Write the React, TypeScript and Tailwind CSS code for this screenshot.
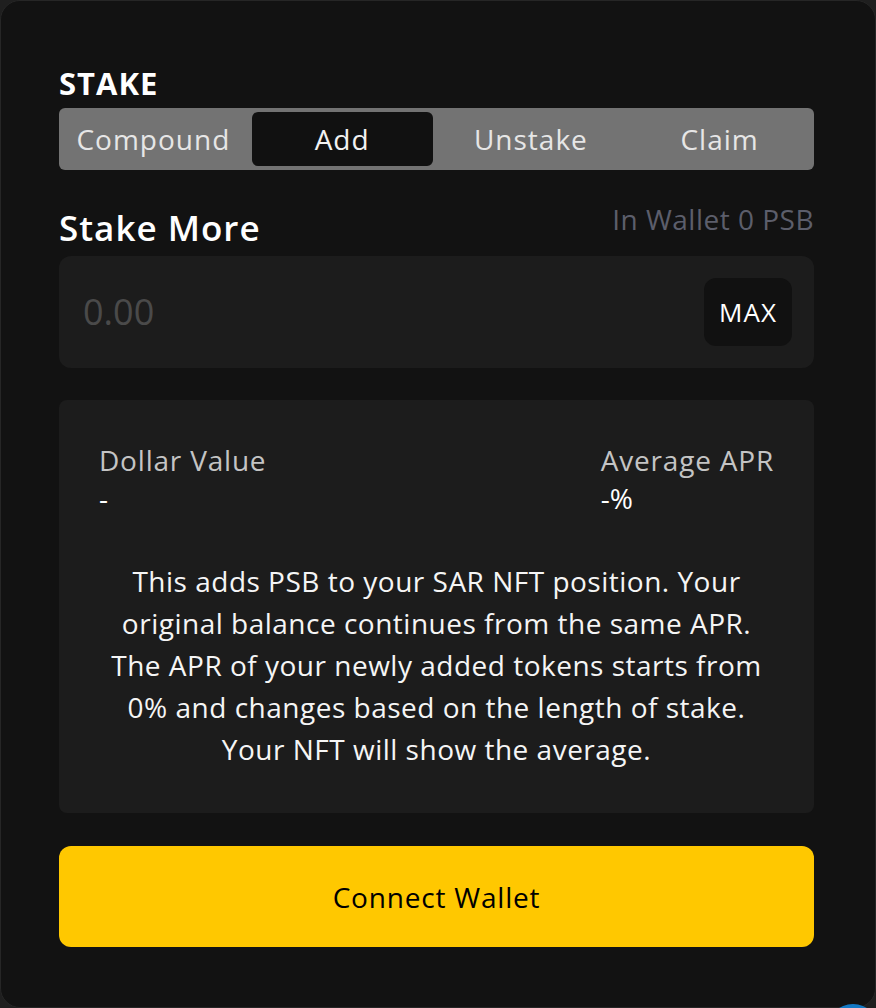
import React from "react";

export default function App() {
  const tabs = ["Compound", "Add", "Unstake", "Claim"];
  return (
    <div
      className="relative h-[1008px] w-[876px] overflow-hidden bg-[#1f1f1f]"
      style={{ fontFamily: '"Open Sans", "Noto Sans", sans-serif' }}
    >
      <div className="flex h-[1008px] w-full flex-col rounded-[20px] border border-[#262626] bg-[#121212] pl-[58px] pr-[61px] pt-[64px]">
        <h1 className="text-[31px] font-bold leading-[36px] tracking-[1px] text-white">STAKE</h1>

        <div className="mt-[7px] grid h-[62px] grid-cols-4 gap-[8px] rounded-[6px] bg-[#737373] p-[4px]">
          {tabs.map((t) => (
            <div
              key={t}
              className={
                t === "Add"
                  ? "flex items-center justify-center rounded-[6px] bg-[#111111] text-[28px] tracking-[1px] text-[#f2f2f2]"
                  : "flex items-center justify-center text-[28px] tracking-[1px] text-[#e6e6e6]"
              }
            >
              {t}
            </div>
          ))}
        </div>

        <div className="mt-[32px] flex items-end justify-between">
          <div className="text-[35px] font-semibold leading-[38px] tracking-[1px] text-white">Stake More</div>
          <div className="mb-[11px] text-[28px] leading-[34px] tracking-[0.5px] text-[#5c5e6b]">In Wallet 0 PSB</div>
        </div>

        <div className="mt-[9px] flex h-[112px] items-center justify-between rounded-[12px] bg-[#1c1c1c] pl-[24px] pr-[22px]">
          <div className="text-[36px] text-[#4a4a4a]">0.00</div>
          <div className="flex h-[68px] w-[88px] items-center justify-center rounded-[12px] bg-[#111111] text-[26px] font-medium tracking-[1px] text-white">
            MAX
          </div>
        </div>

        <div className="mt-[32px] flex h-[413px] flex-col rounded-[8px] bg-[#1c1c1c] px-[40px] pt-[41px]">
          <div className="flex justify-between">
            <div>
              <div className="text-[28px] leading-[38px] tracking-[0.8px] text-[#c4c4c4]">Dollar Value</div>
              <div className="text-[28px] leading-[38px] text-white">-</div>
            </div>
            <div>
              <div className="text-[28px] leading-[38px] tracking-[0.8px] text-[#c4c4c4]">Average APR</div>
              <div className="text-[28px] leading-[38px] text-white">-%</div>
            </div>
          </div>
          <p className="mt-[43px] text-center text-[28px] leading-[42px] tracking-[0.5px] text-[#f5f5f5]">
            This adds PSB to your SAR NFT position. Your
            <br />
            original balance continues from the same APR.
            <br />
            The APR of your newly added tokens starts from
            <br />
            0% and changes based on the length of stake.
            <br />
            Your NFT will show the average.
          </p>
        </div>

        <button className="mt-[33px] flex h-[101px] w-full items-center justify-center rounded-[12px] bg-[#ffc800] text-[28px] font-medium tracking-[0.8px] text-black">
          Connect Wallet
        </button>
      </div>

      <div className="absolute right-[-3px] top-[1004px] h-[52px] w-[52px] rounded-full bg-[#1479c4]" />
    </div>
  );
}
